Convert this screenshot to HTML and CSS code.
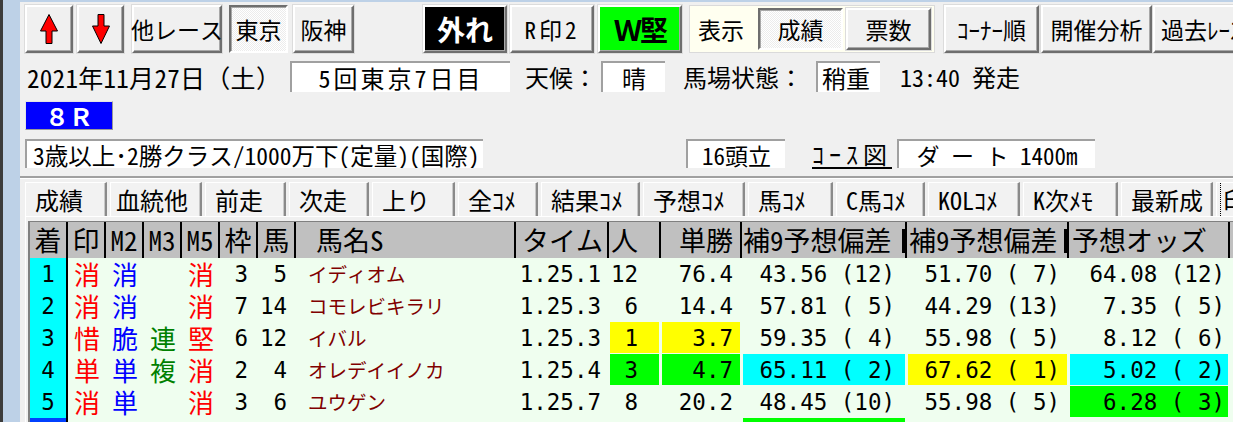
FILE: index.html
```html
<!DOCTYPE html>
<html lang="ja">

<head>
  <meta charset="UTF-8">
  <meta name="viewport" content="width=device-width, initial-scale=1.0">
  <title>成績</title>
  <link rel="stylesheet" href="styles.css">
</head>

<body>
  <div class="window">
    <div class="frame"></div>
    <div class="main">
      <!-- ツールバー -->
      <div class="toolbar">
        <div class="btn b-up">
          <svg width="18" height="30" viewBox="0 0 18 30">
            <path d="M9 0.5 L17.5 17 L12 17 L12 29.5 L6 29.5 L6 17 L0.5 17 Z" fill="#ff0000" stroke="#000" />
          </svg>
        </div>
        <div class="btn b-down">
          <svg width="18" height="30" viewBox="0 0 18 30">
            <path d="M6 0.5 L12 0.5 L12 12 L17.5 12 L9 29.5 L0.5 12 L6 12 Z" fill="#ff0000" stroke="#000" />
          </svg>
        </div>
        <div class="btn b-other">他レース</div>
        <div class="btn b-tokyo pressed">東京</div>
        <div class="btn b-hanshin">阪神</div>
        <div class="btn b-miss">外れ</div>
        <div class="btn b-mark">R印2</div>
        <div class="btn b-w">Ｗ堅</div>
        <div class="view-box">
          <span class="view-label">表示</span>
          <div class="btn b-view pressed">成績</div>
          <div class="btn b-view b-votes">票数</div>
        </div>
        <div class="btn b-corner">ｺｰﾅｰ順</div>
        <div class="btn b-analyze">開催分析</div>
        <div class="btn b-past">過去ﾚｰｽ</div>
      </div>

      <!-- 開催情報 -->
      <div class="info">
        <span class="date">2021年11月27日（土）</span>
        <span class="field f-kai">5回東京7日目</span>
        <span class="label l-weather">天候：</span>
        <span class="field f-weather">晴</span>
        <span class="label l-track">馬場状態：</span>
        <span class="field f-track">稍重</span>
        <span class="start">13:40 発走</span>
      </div>

      <div class="race-no">８Ｒ</div>

      <div class="cond">
        <span class="field f-class">3歳以上･2勝クラス/1000万下(定量)(国際)</span>
        <span class="field f-heads">16頭立</span>
        <span class="course-link">ｺｰｽ図</span>
        <span class="field f-dist">ダ ー ト 1400m</span>
      </div>

      <div class="sep"></div>

      <!-- タブ -->
      <div class="tabs">
        <div class="tab">成績</div>
        <div class="tab">血統他</div>
        <div class="tab">前走</div>
        <div class="tab">次走</div>
        <div class="tab">上り</div>
        <div class="tab">全ｺﾒ</div>
        <div class="tab">結果ｺﾒ</div>
        <div class="tab">予想ｺﾒ</div>
        <div class="tab">馬ｺﾒ</div>
        <div class="tab">C馬ｺﾒ</div>
        <div class="tab">KOLｺﾒ</div>
        <div class="tab">K次ﾒﾓ</div>
        <div class="tab">最新成</div>
        <div class="tab tab-focus"><span>印</span></div>
      </div>

      <div class="page">
        <div class="grid">
          <div class="row head">
            <div class="c-rank">着</div>
            <div>印</div>
            <div>M2</div>
            <div>M3</div>
            <div>M5</div>
            <div>枠</div>
            <div>馬</div>
            <div class="c-name">馬名S</div>
            <div class="c-time">タイム</div>
            <div class="c-pop">人</div>
            <div class="c-win">単勝</div>
            <div class="c-dev1 cut">補9予想偏差</div>
            <div class="c-dev2 cut">補9予想偏差</div>
            <div class="c-odds">予想オッズ</div>
          </div>

          <div class="row body">
            <div class="c-rank">1</div>
            <div class="mk red">消</div>
            <div class="mk blue">消</div>
            <div class="mk"></div>
            <div class="mk red">消</div>
            <div class="num c-waku">3</div>
            <div class="num c-no">5</div>
            <div class="c-name">イディオム</div>
            <div class="num c-time">1.25.1</div>
            <div class="num c-pop">12</div>
            <div class="num c-win">76.4</div>
            <div class="num c-dev1">43.56 (12)</div>
            <div class="num c-dev2">51.70 ( 7)</div>
            <div class="num c-odds">64.08 (12)</div>
          </div>

          <div class="row body">
            <div class="c-rank">2</div>
            <div class="mk red">消</div>
            <div class="mk blue">消</div>
            <div class="mk"></div>
            <div class="mk red">消</div>
            <div class="num c-waku">7</div>
            <div class="num c-no">14</div>
            <div class="c-name">コモレビキラリ</div>
            <div class="num c-time">1.25.3</div>
            <div class="num c-pop">6</div>
            <div class="num c-win">14.4</div>
            <div class="num c-dev1">57.81 ( 5)</div>
            <div class="num c-dev2">44.29 (13)</div>
            <div class="num c-odds">7.35 ( 5)</div>
          </div>

          <div class="row body">
            <div class="c-rank">3</div>
            <div class="mk red">惜</div>
            <div class="mk blue">脆</div>
            <div class="mk green">連</div>
            <div class="mk red">堅</div>
            <div class="num c-waku">6</div>
            <div class="num c-no">12</div>
            <div class="c-name">イバル</div>
            <div class="num c-time">1.25.3</div>
            <div class="num c-pop hl-yellow">1</div>
            <div class="num c-win hl-yellow">3.7</div>
            <div class="num c-dev1">59.35 ( 4)</div>
            <div class="num c-dev2">55.98 ( 5)</div>
            <div class="num c-odds">8.12 ( 6)</div>
          </div>

          <div class="row body">
            <div class="c-rank">4</div>
            <div class="mk red">単</div>
            <div class="mk blue">単</div>
            <div class="mk green">複</div>
            <div class="mk red">消</div>
            <div class="num c-waku">2</div>
            <div class="num c-no">4</div>
            <div class="c-name">オレデイイノカ</div>
            <div class="num c-time">1.25.4</div>
            <div class="num c-pop hl-green">3</div>
            <div class="num c-win hl-green">4.7</div>
            <div class="num c-dev1 hl-cyan">65.11 ( 2)</div>
            <div class="num c-dev2 hl-yellow">67.62 ( 1)</div>
            <div class="num c-odds hl-cyan">5.02 ( 2)</div>
          </div>

          <div class="row body">
            <div class="c-rank">5</div>
            <div class="mk red">消</div>
            <div class="mk blue">単</div>
            <div class="mk"></div>
            <div class="mk red">消</div>
            <div class="num c-waku">3</div>
            <div class="num c-no">6</div>
            <div class="c-name">ユウゲン</div>
            <div class="num c-time">1.25.7</div>
            <div class="num c-pop">8</div>
            <div class="num c-win">20.2</div>
            <div class="num c-dev1">48.45 (10)</div>
            <div class="num c-dev2">55.98 ( 5)</div>
            <div class="num c-odds hl-green">6.28 ( 3)</div>
          </div>

          <div class="row body">
            <div class="c-rank sel">6</div>
            <div></div>
            <div></div>
            <div></div>
            <div></div>
            <div></div>
            <div></div>
            <div></div>
            <div></div>
            <div></div>
            <div></div>
            <div class="c-dev1 hl-green"></div>
            <div></div>
            <div></div>
          </div>
        </div>
      </div>
    </div>
  </div>
</body>

</html>
```

FILE: styles.css
```css
* {
  margin: 0;
  padding: 0;
  box-sizing: border-box;
}

body {
  height: 422px;
  overflow: hidden;
  background-color: #f0f0f0;
  color: #000;
  font-family: "Noto Sans Mono CJK JP", "Noto Sans CJK JP", monospace;
}

.window {
  display: flex;
  height: 422px;
}

.frame {
  width: 20px;
  flex: none;
  border-left: 3px solid #3c3c3c;
  background-color: #bdd1e7;
}

.main {
  flex: 1;
  min-width: 0;
  overflow: hidden;
  border-top: 2px solid #bdd1e7;
  padding: 3px 0 0 5px;
}

/* ---------- ツールバー ---------- */
.toolbar {
  display: flex;
  height: 48px;
  white-space: nowrap;
}

.btn {
  display: flex;
  flex: none;
  align-items: center;
  justify-content: center;
  height: 48px;
  font-size: 23px;
  background-color: #f0f0f0;
  border: 2px solid;
  border-color: #fff #6e6e6e #6e6e6e #fff;
  box-shadow: inset -1px -1px 0 #a8a8a8, 0 0 0 1px #dcdcdc;
}

/* へこんだボタン */
.pressed {
  border-color: #6e6e6e #fff #fff #6e6e6e;
  box-shadow: inset 1px 1px 0 #a8a8a8;
  background: repeating-conic-gradient(#fff 0 25%, #ececec 0 50%) 0 0 / 2px 2px;
}

.b-up { width: 48px; }
.b-down { width: 47px; margin-left: 4px; }
.b-other { width: 90px; margin-left: 8px; }
.b-tokyo { width: 59px; margin-left: 7px; }
.b-hanshin { width: 61px; margin-left: 5px; }

.b-miss {
  width: 84px;
  margin-left: 69px;
  background-color: #000;
  color: #fff;
  font-size: 28px;
  font-weight: 700;
}

.b-mark {
  width: 84px;
  margin-left: 3px;
  letter-spacing: 3px;
}

.b-w {
  width: 84px;
  margin-left: 4px;
  background-color: #00ff00;
  font-size: 28px;
  font-weight: 700;
  letter-spacing: -2px;
}

.view-box {
  display: flex;
  align-items: center;
  flex: none;
  width: 246px;
  height: 48px;
  margin-left: 7px;
  padding-left: 8px;
  background-color: #fffff0;
  border: 1px solid #dadada;
}

.view-label {
  font-size: 23px;
  width: 60px;
}

.b-view {
  width: 85px;
  height: 42px;
}

.b-votes { margin-left: 3px; }
.b-corner { width: 95px; margin-left: 9px; }
.b-analyze { width: 111px; margin-left: 2px; }
.b-past { width: 110px; margin-left: 1px; justify-content: flex-start; padding-left: 6px; }

/* ---------- 開催情報 ---------- */
.info {
  display: flex;
  align-items: center;
  height: 31px;
  margin-top: 8px;
  font-size: 24px;
  white-space: nowrap;
}

.field {
  display: flex;
  align-items: center;
  flex: none;
  height: 100%;
  background-color: #fff;
  border-top: 2px solid #a0a0a0;
  border-left: 2px solid #a0a0a0;
  overflow: hidden;
}

.date { width: 265px; padding-left: 2px; font-size: 25px; letter-spacing: 0.3px; }
.f-kai { width: 220px; justify-content: center; letter-spacing: 3px; }
.l-weather { width: 76px; margin-left: 15px; }
.f-weather { width: 64px; justify-content: center; }
.l-track { width: 133px; margin-left: 18px; }
.f-track { width: 64px; padding-left: 4px; }
.start { margin-left: 20px; }

.race-no {
  width: 88px;
  height: 29px;
  margin-top: 9px;
  background-color: #0000ff;
  color: #fff;
  font-size: 24px;
  font-weight: 700;
  line-height: 27px;
  text-align: center;
  border: 1px solid;
  border-color: #e4e4e4 #9a9a9a #9a9a9a #e4e4e4;
}

.cond {
  display: flex;
  align-items: center;
  height: 29px;
  margin-top: 9px;
  font-size: 23px;
  white-space: nowrap;
}

.f-class { width: 458px; padding-left: 6px; font-size: 23.5px; }
.f-heads { width: 99px; margin-left: 203px; justify-content: center; }

.course-link {
  width: 75px;
  margin-left: 27px;
  font-size: 24px;
  letter-spacing: 5px;
  text-decoration: underline;
  text-decoration-thickness: 2px;
  text-underline-offset: 3px;
}

.f-dist { width: 198px; margin-left: 10px; justify-content: center; }

.sep {
  height: 3px;
  margin: 8px 0 0 -5px;
  border-top: 2px solid #a0a0a0;
  border-bottom: 1px solid #fff;
}

/* ---------- タブ ---------- */
.tabs {
  display: flex;
  gap: 3px;
  height: 34px;
  margin-top: 3px;
  white-space: nowrap;
}

.tab {
  display: flex;
  align-items: center;
  flex: none;
  height: 34px;
  padding-left: 9px;
  font-size: 24px;
  background-color: #f2f2f2;
  border-top: 1px solid #fff;
  border-left: 1px solid #fff;
  border-right: 2px solid #8a8a8a;
  box-shadow: inset -1px 0 0 #c8c8c8;
  overflow: hidden;
}

.tab:nth-child(1) { width: 82px; }
.tab:nth-child(2) { width: 92px; padding-left: 5px; }
.tab:nth-child(3) { width: 81px; }
.tab:nth-child(4) { width: 80px; }
.tab:nth-child(5) { width: 83px; }
.tab:nth-child(6) { width: 80px; }
.tab:nth-child(7) { width: 99px; }
.tab:nth-child(8) { width: 102px; }
.tab:nth-child(9) { width: 85px; }
.tab:nth-child(10) { width: 89px; }
.tab:nth-child(11) { width: 92px; }
.tab:nth-child(12) { width: 95px; }
.tab:nth-child(13) { width: 92px; }

.tab-focus {
  width: 60px;
  padding-left: 4px;
  border-right: none;
  box-shadow: none;
}

.tab-focus span {
  outline: 1px dotted #000;
  padding: 0 2px;
}

/* ---------- 成績表 ---------- */
.page {
  border-top: 1px solid #fff;
  border-left: 1px solid #fff;
  padding: 4px 0 0 2px;
}

.grid {
  border-top: 1px solid #808080;
  border-left: 2px solid #808080;
}

.row {
  display: grid;
  grid-template-columns: repeat(7, 38px) 220px 93px 52px 81px 165px 162px 161px;
}

.row > div {
  overflow: hidden;
  white-space: nowrap;
}

.head {
  background-color: #c0c0c0;
}

.head > div {
  position: relative;
  height: 36px;
  line-height: 36px;
  font-size: 27px;
  text-align: center;
  border-right: 2px solid #000;
}

.head .c-name { text-align: left; padding-left: 20px; }
.head .c-time { text-align: left; padding-left: 6px; }
.head .c-pop { text-align: left; padding-left: 2px; }
.head .c-win { text-align: right; padding-right: 7px; }
.head .c-dev1 { text-align: left; padding-left: 1px; }
.head .c-dev2 { text-align: left; padding-left: 2px; }
.head .c-odds { text-align: left; padding-left: 3px; }

/* 見出しの切れた括弧 */
.head .cut::after {
  content: "";
  position: absolute;
  right: 0;
  top: 7px;
  width: 3px;
  height: 24px;
  background-color: #000;
}

.body {
  background-color: #effeef;
}

.body > div {
  height: 32px;
  line-height: 32px;
}

.body .c-rank {
  background-color: #00ffff;
  border-right: 2px solid #000;
  text-align: center;
  font-family: "DejaVu Sans Mono", monospace;
  font-size: 22.5px;
}

.body .c-rank.sel {
  background-color: #0040ff;
}

.mk {
  font-size: 26px;
  text-align: center;
}

.red { color: #ff0000; }
.blue { color: #0000ff; }
.green { color: #008000; }

.num {
  font-family: "DejaVu Sans Mono", monospace;
  font-size: 22.5px;
  text-align: right;
  white-space: pre;
}

.row > .num {
  white-space: pre;
}

.body .c-waku { padding-right: 10px; }
.body .c-no { padding-right: 9px; }

.body .c-name {
  padding-left: 12px;
  font-size: 19.5px;
  color: #800000;
}

.body .c-time { padding-right: 8px; }
.body .c-pop { padding-right: 23px; }
.body .c-win { padding-right: 9px; }
.body .c-dev1 { padding-right: 12px; }
.body .c-dev2 { padding-right: 9px; }
.body .c-odds { padding-right: 5px; }

.hl-yellow,
.hl-green,
.hl-cyan {
  box-shadow: inset 1px 0 0 #effeef, inset -2px -1px 0 #effeef;
}

.hl-yellow { background-color: #ffff00; }
.hl-green { background-color: #00ff00; }
.hl-cyan { background-color: #00ffff; }
```
